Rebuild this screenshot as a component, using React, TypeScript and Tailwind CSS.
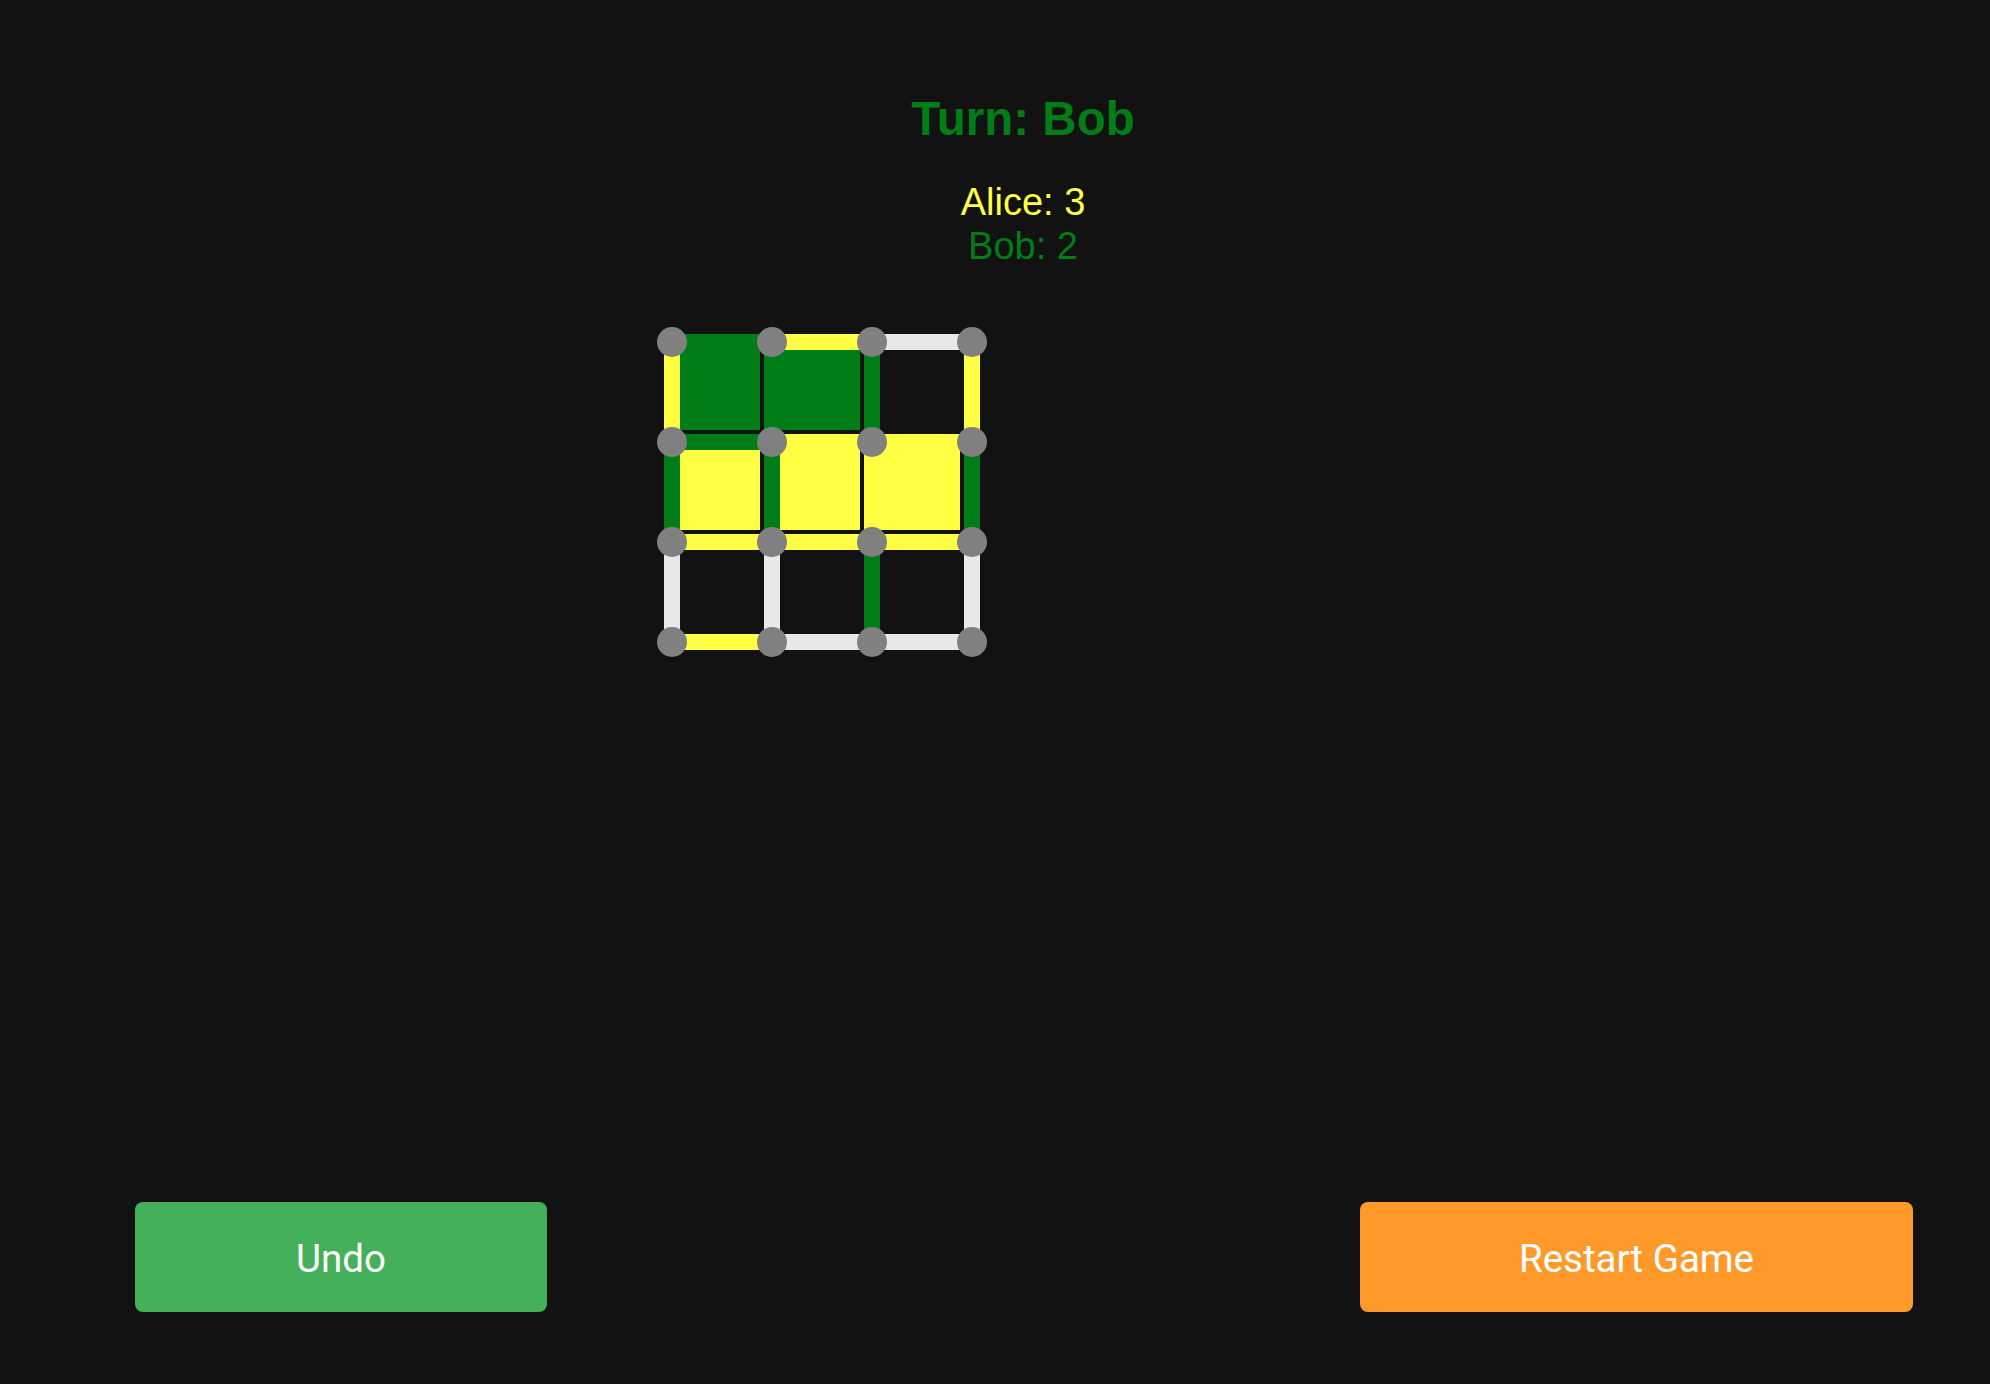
import React from 'react';

type Owner = 'A' | 'B' | null;

const GREEN = '#017d18';
const YELLOW = '#ffff44';
const EMPTY = '#e8e8e8';

// horizontal edges [row][col], vertical edges [row][col], boxes [row][col]
const hLines: Owner[][] = [
  ['B', 'A', null],
  ['B', 'A', 'A'],
  ['A', 'A', 'A'],
  ['A', null, null],
];
const vLines: Owner[][] = [
  ['A', 'B', 'B', 'A'],
  ['B', 'B', 'A', 'B'],
  [null, null, 'B', null],
];
const boxes: Owner[][] = [
  ['B', 'B', null],
  ['A', 'A', 'A'],
  [null, null, null],
];

const color = (o: Owner) => (o === 'A' ? YELLOW : o === 'B' ? GREEN : EMPTY);

const Board = () => (
  <svg width={332} height={332} viewBox="0 0 332 332">
    {hLines.map((row, r) =>
      row.map((o, c) => (
        <rect key={`h${r}${c}`} x={16 + 100 * c} y={8 + 100 * r} width={100} height={16} fill={color(o)} />
      ))
    )}
    {vLines.map((row, r) =>
      row.map((o, c) => (
        <rect key={`v${r}${c}`} x={8 + 100 * c} y={16 + 100 * r} width={16} height={100} fill={color(o)} />
      ))
    )}
    {boxes.map((row, r) =>
      row.map((o, c) =>
        o ? <rect key={`b${r}${c}`} x={24 + 100 * c} y={24 + 100 * r} width={80} height={80} fill={color(o)} /> : null
      )
    )}
    {[0, 1, 2, 3].map((r) =>
      [0, 1, 2, 3].map((c) => <circle key={`d${r}${c}`} cx={16 + 100 * c} cy={16 + 100 * r} r={15} fill="#808080" />)
    )}
  </svg>
);

const App = () => {
  return (
    <div className="min-h-screen bg-[#121212] flex flex-col pt-[95px] font-['Liberation_Sans',Arial,sans-serif]">
      <div className="pl-[56px] text-center">
        <h1 className="text-[47.5px] leading-[47px] font-bold text-[#017d18]">Turn: Bob</h1>
        <div className="mt-[38px] text-[38px] leading-[44px]">
          <div className="text-[#ffff44]">Alice: 3</div>
          <div className="text-[#017d18]">Bob: 2</div>
        </div>
      </div>

      <div className="mt-[58px] pl-[656px]">
        <Board />
      </div>

      <div className="mt-auto flex justify-between pl-[135px] pr-[77px] pb-[72px] font-['Roboto',sans-serif]">
        <button className="w-[412px] h-[110px] pt-[3px] rounded-lg bg-[#44b05a] text-white text-[38.5px]">Undo</button>
        <button className="w-[553px] h-[110px] pt-[3px] rounded-lg bg-[#ff9a2a] text-white text-[38.5px]">Restart Game</button>
      </div>
    </div>
  );
};

export default App;
